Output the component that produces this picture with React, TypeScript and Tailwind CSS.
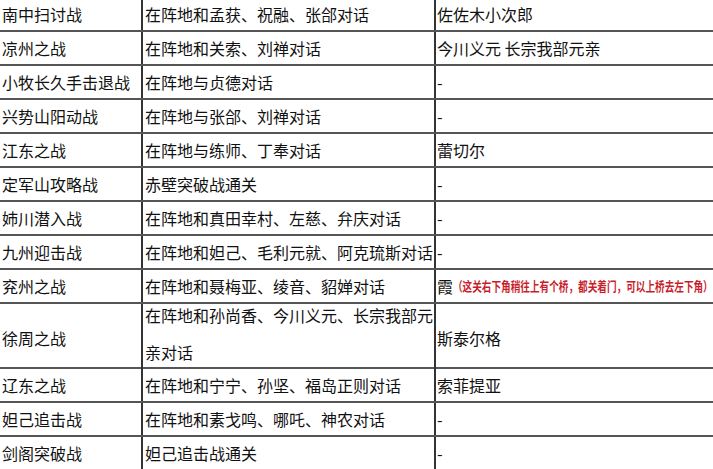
import React from "react";

interface Row {
  stage: string;
  condition: string;
  reward: string;
  note?: string;
  tall?: boolean;
}

const rows: Row[] = [
  { stage: "南中扫讨战", condition: "在阵地和孟获、祝融、张郃对话", reward: "佐佐木小次郎" },
  { stage: "凉州之战", condition: "在阵地和关索、刘禅对话", reward: "今川义元 长宗我部元亲" },
  { stage: "小牧长久手击退战", condition: "在阵地与贞德对话", reward: "-" },
  { stage: "兴势山阳动战", condition: "在阵地与张郃、刘禅对话", reward: "-" },
  { stage: "江东之战", condition: "在阵地与练师、丁奉对话", reward: "蕾切尔" },
  { stage: "定军山攻略战", condition: "赤壁突破战通关", reward: "-" },
  { stage: "姉川潜入战", condition: "在阵地和真田幸村、左慈、弁庆对话", reward: "-" },
  { stage: "九州迎击战", condition: "在阵地和妲己、毛利元就、阿克琉斯对话", reward: "-" },
  {
    stage: "兖州之战",
    condition: "在阵地和聂梅亚、绫音、貂婵对话",
    reward: "霞",
    note: "（这关右下角稍往上有个桥，都关着门，可以上桥去左下角）",
  },
  { stage: "徐周之战", condition: "在阵地和孙尚香、今川义元、长宗我部元亲对话", reward: "斯泰尔格", tall: true },
  { stage: "辽东之战", condition: "在阵地和宁宁、孙坚、福岛正则对话", reward: "索菲提亚" },
  { stage: "妲己追击战", condition: "在阵地和素戈鸣、哪吒、神农对话", reward: "-" },
  { stage: "剑阁突破战", condition: "妲己追击战通关", reward: "-" },
];

const App = () => {
  return (
    <div
      className="w-[713px] h-[469px] overflow-hidden bg-white text-[16px] text-[#111]"
      style={{ fontFamily: '"Noto Sans CJK SC", "Noto Sans", sans-serif' }}
    >
      <div className="-mt-[2px] flex flex-col">
        {rows.map((row) => (
          <div
            key={row.stage}
            className={`grid grid-cols-[141px_295px_1fr] border-b-2 border-[#555] ${row.tall ? "h-[65px]" : "h-[34px]"}`}
          >
            <div className="flex items-center pl-[2px] whitespace-nowrap">{row.stage}</div>
            <div className="flex items-center border-l-2 border-r-2 border-[#333] pl-[2px]">
              {row.tall ? (
                <div className="self-start -mt-[7px] leading-[37px]">{row.condition}</div>
              ) : (
                <span className="whitespace-nowrap">{row.condition}</span>
              )}
            </div>
            <div className="flex items-center pl-[1px] whitespace-nowrap overflow-hidden">
              <span>{row.reward}</span>
              {row.note && (
                <span className="inline-block origin-left scale-x-[0.74] text-[13px] font-bold text-[#c81e2c]">
                  {row.note}
                </span>
              )}
            </div>
          </div>
        ))}
      </div>
    </div>
  );
};

export default App;
